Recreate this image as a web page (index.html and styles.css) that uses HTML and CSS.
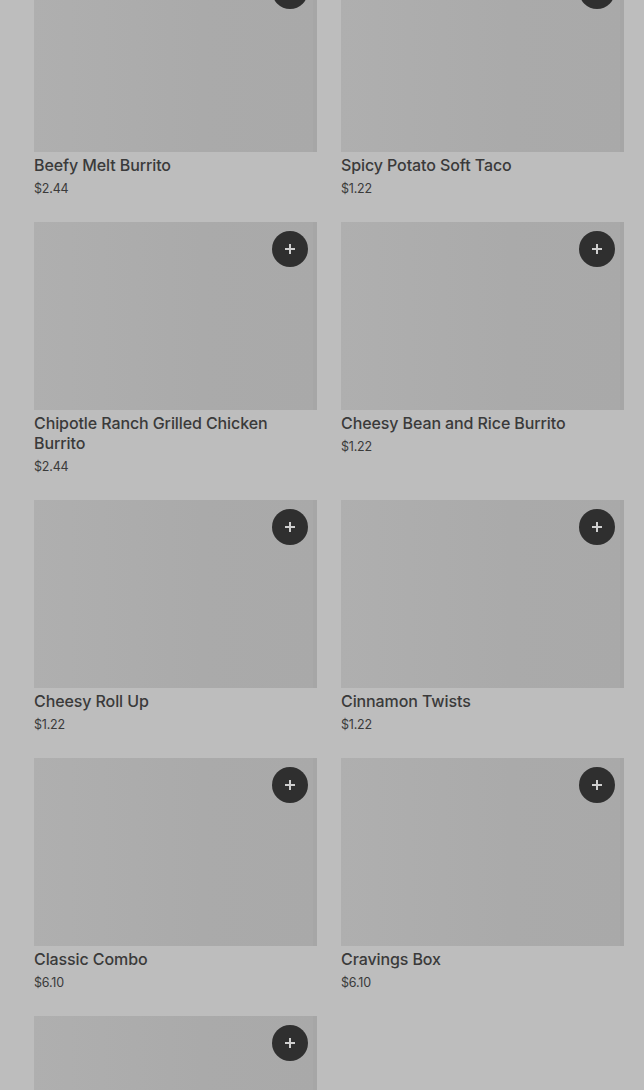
FILE: index.html
```html
<!DOCTYPE html>
<html lang="en">
<head>
<meta charset="utf-8">
<title>Menu</title>
<link rel="stylesheet" href="styles.css">
</head>
<body>
<main class="grid">
  <div class="card">
    <div class="thumb"><button class="add" aria-label="Add"><svg viewBox="0 0 12 12" width="12" height="12"><path d="M6 1v10M1 6h10" stroke="#cfcfcf" stroke-width="2"/></svg></button></div>
    <div class="name">Beefy Melt Burrito</div>
    <div class="price">$2.44</div>
  </div>
  <div class="card">
    <div class="thumb"><button class="add" aria-label="Add"><svg viewBox="0 0 12 12" width="12" height="12"><path d="M6 1v10M1 6h10" stroke="#cfcfcf" stroke-width="2"/></svg></button></div>
    <div class="name">Spicy Potato Soft Taco</div>
    <div class="price">$1.22</div>
  </div>
  <div class="card">
    <div class="thumb"><button class="add" aria-label="Add"><svg viewBox="0 0 12 12" width="12" height="12"><path d="M6 1v10M1 6h10" stroke="#cfcfcf" stroke-width="2"/></svg></button></div>
    <div class="name">Chipotle Ranch Grilled Chicken Burrito</div>
    <div class="price">$2.44</div>
  </div>
  <div class="card">
    <div class="thumb"><button class="add" aria-label="Add"><svg viewBox="0 0 12 12" width="12" height="12"><path d="M6 1v10M1 6h10" stroke="#cfcfcf" stroke-width="2"/></svg></button></div>
    <div class="name">Cheesy Bean and Rice Burrito</div>
    <div class="price">$1.22</div>
  </div>
  <div class="card">
    <div class="thumb"><button class="add" aria-label="Add"><svg viewBox="0 0 12 12" width="12" height="12"><path d="M6 1v10M1 6h10" stroke="#cfcfcf" stroke-width="2"/></svg></button></div>
    <div class="name">Cheesy Roll Up</div>
    <div class="price">$1.22</div>
  </div>
  <div class="card">
    <div class="thumb"><button class="add" aria-label="Add"><svg viewBox="0 0 12 12" width="12" height="12"><path d="M6 1v10M1 6h10" stroke="#cfcfcf" stroke-width="2"/></svg></button></div>
    <div class="name">Cinnamon Twists</div>
    <div class="price">$1.22</div>
  </div>
  <div class="card">
    <div class="thumb"><button class="add" aria-label="Add"><svg viewBox="0 0 12 12" width="12" height="12"><path d="M6 1v10M1 6h10" stroke="#cfcfcf" stroke-width="2"/></svg></button></div>
    <div class="name">Classic Combo</div>
    <div class="price">$6.10</div>
  </div>
  <div class="card">
    <div class="thumb"><button class="add" aria-label="Add"><svg viewBox="0 0 12 12" width="12" height="12"><path d="M6 1v10M1 6h10" stroke="#cfcfcf" stroke-width="2"/></svg></button></div>
    <div class="name">Cravings Box</div>
    <div class="price">$6.10</div>
  </div>
  <div class="card">
    <div class="thumb"><button class="add" aria-label="Add"><svg viewBox="0 0 12 12" width="12" height="12"><path d="M6 1v10M1 6h10" stroke="#cfcfcf" stroke-width="2"/></svg></button></div>
  </div>
</main>
</body>
</html>
```
FILE: styles.css
```css
html, body {
  margin: 0;
  padding: 0;
  background: #bdbdbd;
  overflow: hidden;
}
body {
  font-family: Inter, "Noto Sans", sans-serif;
  color: #3a3a3a;
}
.grid {
  display: grid;
  grid-template-columns: 283px 283px;
  column-gap: 24px;
  padding-left: 34px;
  margin-top: -36px;
}
.card {
  display: flex;
  flex-direction: column;
  padding-bottom: 24px;
}
.thumb {
  position: relative;
  height: 188px;
  background: linear-gradient(to right, #afafaf, #aaaaaa 60%, #a9a9a9);
  box-shadow: inset -4px 0 0 #a6a6a6;
}
.add {
  position: absolute;
  top: 9px;
  right: 9px;
  width: 36px;
  height: 36px;
  border: none;
  border-radius: 50%;
  background: #2f2f2f;
  padding: 0;
  display: flex;
  align-items: center;
  justify-content: center;
}
.name {
  margin-top: 3px;
  font-size: 16px;
  line-height: 20px;
  font-weight: 500;
  letter-spacing: -0.1px;
  color: #3a3a3a;
}
.price {
  margin-top: 4px;
  margin-bottom: -1px;
  font-size: 12.5px;
  line-height: 20px;
  letter-spacing: -0.2px;
  color: #3a3a3a;
}
```
